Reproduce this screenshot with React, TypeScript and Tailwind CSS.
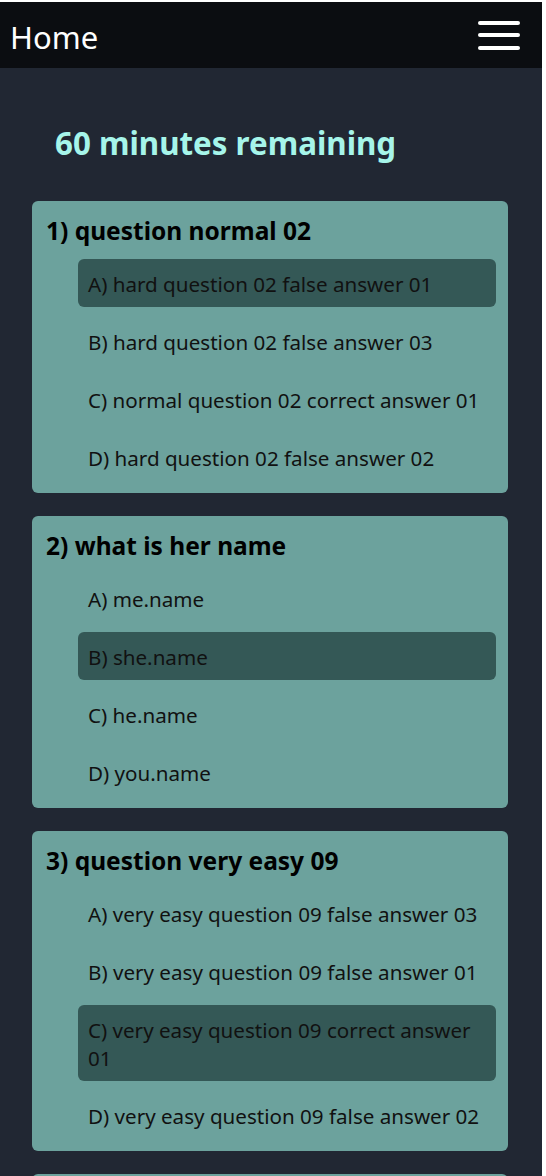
import React from "react";

type Q = { title: string; options: string[]; selected: number };

const questions: Q[] = [
  {
    title: "1) question normal 02",
    options: [
      "A) hard question 02 false answer 01",
      "B) hard question 02 false answer 03",
      "C) normal question 02 correct answer 01",
      "D) hard question 02 false answer 02",
    ],
    selected: 0,
  },
  {
    title: "2) what is her name",
    options: ["A) me.name", "B) she.name", "C) he.name", "D) you.name"],
    selected: 1,
  },
  {
    title: "3) question very easy 09",
    options: [
      "A) very easy question 09 false answer 03",
      "B) very easy question 09 false answer 01",
      "C) very easy question 09 correct answer 01",
      "D) very easy question 09 false answer 02",
    ],
    selected: 2,
  },
  {
    title: "4) question hard 05",
    options: [
      "A) hard question 05 false answer 01",
      "B) hard question 05 correct answer 01",
      "C) hard question 05 false answer 02",
      "D) hard question 05 false answer 03",
    ],
    selected: 1,
  },
];

export default function App() {
  return (
    <div className="bg-white pt-[2px] pr-[4px] font-['Noto_Sans',sans-serif]">
      <div className="bg-[#212733] min-h-[1174px]">
        <nav className="h-[66px] bg-[#0b0d11] flex items-center justify-between pl-[10px] pr-[22px]">
          <span className="text-white text-[31px] leading-none pt-[4px]">Home</span>
          <div className="flex flex-col gap-[8.5px] w-[42px]">
            <span className="block h-[4px] rounded-full bg-white" />
            <span className="block h-[4px] rounded-full bg-white" />
            <span className="block h-[4px] rounded-full bg-white" />
          </div>
        </nav>
        <h2 className="pl-[55px] pt-[55px] mb-[38px] text-[31.3px] leading-[40px] font-bold text-[#a6f5ea]">
          60 minutes remaining
        </h2>
        <div className="flex flex-col gap-[23px] pl-[32px] pr-[34px]">
          {questions.map((q, qi) => (
            <div key={qi} className="bg-[#6ca29d] rounded-[6px] pt-[14px] pb-[12px] pl-[14px] pr-[12px]">
              <h3 className="text-[24.5px] leading-[32px] font-bold text-black mb-[12px]">{q.title}</h3>
              <div className="flex flex-col gap-[10px] pl-[32px]">
                {q.options.map((o, oi) => (
                  <div
                    key={oi}
                    className={
                      "px-[10px] pt-[11px] pb-[9px] text-[20.6px] leading-[28px] text-[#111] rounded-[6px] " +
                      (oi === q.selected ? "bg-[#345856]" : "")
                    }
                  >
                    {o}
                  </div>
                ))}
              </div>
            </div>
          ))}
        </div>
        <div className="h-[40px]" />
      </div>
    </div>
  );
}
